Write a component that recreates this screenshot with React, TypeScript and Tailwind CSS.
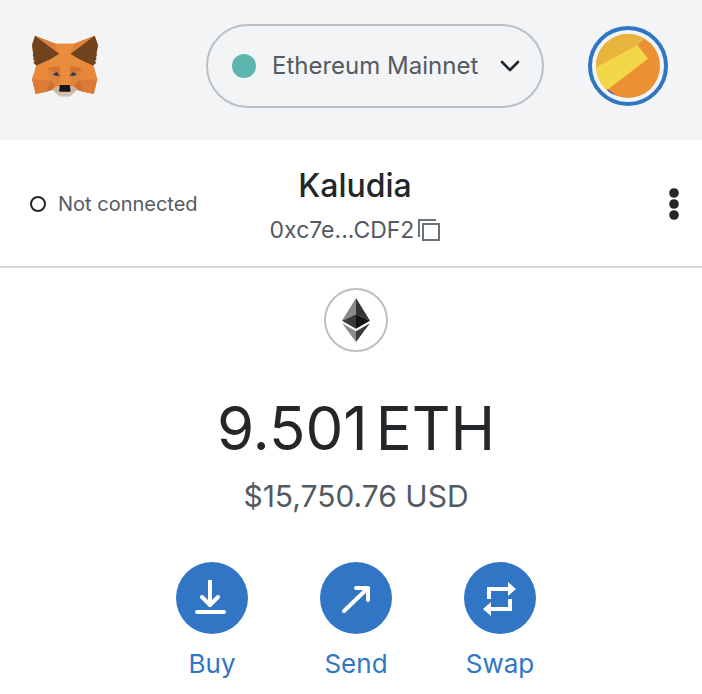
import type { ReactNode } from 'react'

function FoxLogo() {
    return (
        <svg className="h-[62px] w-[66px]" viewBox="36 30 198 186" role="img" aria-label="MetaMask">
            <path d="M45 32L107 56H162L224 32L234 62L229 94L220 121L232 163L221 207L190 200L171 194L150 214H119L98 194L79 200L47 207L36 163L49 121L40 94L36 62Z" fill="#E88A3A" />
            <path d="M45 32L118 87L107 56Z" fill="#DF8038" />
            <path d="M224 32L151 87L162 56Z" fill="#DF8038" />
            <path d="M45 32L118 87L93 102L50 122L40 113L44 109L39 101L42 96L38 92L40 86L36 60Z" fill="#70431F" />
            <path d="M224 32L151 87L176 102L219 122L229 113L225 109L230 101L227 96L231 92L229 86L234 60Z" fill="#70431F" />
            <path d="M49 122L93 102L82 130L91 165H36Z" fill="#E88838" />
            <path d="M220 122L176 102L187 130L178 165H232Z" fill="#E88838" />
            <path d="M36 163L91 165L79 200L47 207Z" fill="#DB7B36" />
            <path d="M232 163L178 165L190 200L221 207Z" fill="#DB7B36" />
            <path d="M91 165L110 178L98 194L79 200Z" fill="#CC7033" />
            <path d="M178 165L159 178L171 194L190 200Z" fill="#CC7033" />
            <path d="M93 102L118 87L119 130L82 130Z" fill="#E88D3D" />
            <path d="M176 102L151 87L150 130L187 130Z" fill="#E88D3D" />
            <path d="M82 130L121 158L113 191L91 165Z" fill="#DE843C" />
            <path d="M187 130L148 158L156 191L178 165Z" fill="#DE843C" />
            <path d="M118 87L107 56H162L151 87L150 130L148 180H121L119 130Z" fill="#EA8C3C" />
            <path d="M82 130L118 122L121 158Z" fill="#D47434" />
            <path d="M187 130L151 122L148 158Z" fill="#D47434" />
            <path d="M97 193L113 183L120 188H149L156 183L172 193L150 214H119Z" fill="#D5BFB2" />
            <path d="M97 193L113 183L118 198L119 205Z" fill="#C6B3A5" />
            <path d="M172 193L156 183L151 198L150 205Z" fill="#C6B3A5" />
            <path d="M98 149L110 141L119 152L108 152Z" fill="#263852" />
            <path d="M171 149L159 141L150 152L161 152Z" fill="#263852" />
            <path d="M120 180H149L152 197L149 200H120L117 197Z" fill="#161616" />
        </svg>
    )
}

function Avatar() {
    return (
        <svg className="h-16 w-16" viewBox="0 0 192 192" aria-hidden="true">
            <clipPath id="avatar">
                <circle cx="96" cy="96" r="96" />
            </clipPath>
            <g clipPath="url(#avatar)">
                <path d="M0 0H192V192H0Z" fill="#EC9034" />
                <path d="M0 0H165L124 33L0 104Z" fill="#E8B43E" />
                <path d="M-6 104L124 33L156 74L36 166L0 192Z" fill="#F2D849" />
                <path d="M35 166L58 183L50 192H20Z" fill="#2F4FD0" />
            </g>
        </svg>
    )
}

function EthLogo() {
    return (
        <svg className="h-11 w-7" viewBox="0 0 84 132" role="img" aria-label="ETH">
            <path d="M42 0L0 68L42 49Z" fill="#8A8A8A" />
            <path d="M42 0L84 68L42 49Z" fill="#343434" />
            <path d="M0 68L42 49V92Z" fill="#393939" />
            <path d="M84 68L42 49V92Z" fill="#141414" />
            <path d="M0 76L42 100V132Z" fill="#8C8C8C" />
            <path d="M84 76L42 100V132Z" fill="#3C3C3B" />
        </svg>
    )
}

function Action({ label, children }: { label: string; children: ReactNode }) {
    return (
        <button className="flex w-18 cursor-pointer flex-col items-center gap-3 text-[26px] leading-9 text-[#3076c4]">
            <span className="flex h-18 w-18 items-center justify-center rounded-full bg-[#3076c4]">
                <svg className="h-9 w-9" viewBox="0 0 36 36" fill="none" stroke="white" strokeWidth="4" aria-hidden="true">
                    {children}
                </svg>
            </span>
            {label}
        </button>
    )
}

export default function App() {
    return (
        <div className="bg-white font-['Inter',sans-serif] text-[#24272a]">
            <header className="flex h-35 items-center bg-[#f2f4f6] pr-[34px] pb-2 pl-8">
                <FoxLogo />
                <button className="mr-11 ml-auto flex h-21 w-[338px] cursor-pointer items-center rounded-full border-2 border-[#bbc0c5] pr-[22px] pl-6 text-2xl text-[#535a61]">
                    <span className="mr-4 h-6 w-6 rounded-full bg-[#5cb5ae]"></span>
                    Ethereum Mainnet
                    <svg className="ml-auto h-3 w-5" viewBox="0 0 20 12" fill="none" aria-hidden="true">
                        <path d="M2 2L10 10L18 2" stroke="#24272a" strokeWidth="2.6" strokeLinecap="round" strokeLinejoin="round" />
                    </svg>
                </button>
                <button aria-label="My accounts" className="flex h-20 w-20 cursor-pointer items-center justify-center rounded-full border-4 border-[#3076c4]">
                    <Avatar />
                </button>
            </header>

            <section className="grid h-32 grid-cols-[1fr_auto_1fr] items-center border-b-2 border-[#d6d9dc] pt-0.5 pr-[22px] pl-[30px]">
                <div className="flex items-center gap-3 text-xl text-[#535a61]">
                    <span className="h-4 w-4 rounded-full border-2 border-[#24272a]"></span>
                    Not connected
                </div>
                <div className="flex flex-col items-center pt-1">
                    <h1 className="text-[32px] leading-12 font-medium">Kaludia</h1>
                    <button className="flex cursor-pointer items-center gap-1 text-[23px] leading-10 text-[#535a61]">
                        0xc7e...CDF2
                        <svg className="h-[22px] w-[22px]" viewBox="0 0 22 22" fill="none" stroke="#6a737d" strokeWidth="2" aria-hidden="true">
                            <path d="M18 1H1V18" />
                            <path d="M5 5H21V21H5Z" />
                        </svg>
                    </button>
                </div>
                <button aria-label="Account options" className="cursor-pointer justify-self-end">
                    <svg className="h-8 w-3" viewBox="0 0 12 32" fill="#24272a" aria-hidden="true">
                        <circle cx="6" cy="5" r="4.8" />
                        <circle cx="6" cy="16" r="4.8" />
                        <circle cx="6" cy="27" r="4.8" />
                    </svg>
                </button>
            </section>

            <main className="flex flex-col items-center pt-5 pl-2.5">
                <div className="flex h-16 w-16 items-center justify-center rounded-full border-2 border-[#bbc0c5]">
                    <EthLogo />
                </div>
                <p className="mt-9 flex gap-2 text-[60px] leading-20">
                    <span>9.501</span>
                    <span>ETH</span>
                </p>
                <p className="mt-1 text-[30px] leading-12 text-[#535a61]">$15,750.76 USD</p>
                <div className="mt-[42px] flex gap-18">
                    <Action label="Buy">
                        <g strokeLinecap="round">
                            <path d="M16 1V25" />
                            <path d="M8 17L16 25L24 17" strokeLinejoin="round" />
                            <path d="M3 32H30" />
                        </g>
                    </Action>
                    <Action label="Send">
                        <path d="M6 31L30 8M18 8H30V20" strokeLinecap="round" strokeLinejoin="round" />
                    </Action>
                    <Action label="Swap">
                        <path d="M7 19V9H27M28 19V29H8" />
                        <path d="M26 2L34 9L26 16ZM9 22L1 29L9 36Z" fill="white" stroke="none" />
                    </Action>
                </div>
            </main>
        </div>
    )
}
